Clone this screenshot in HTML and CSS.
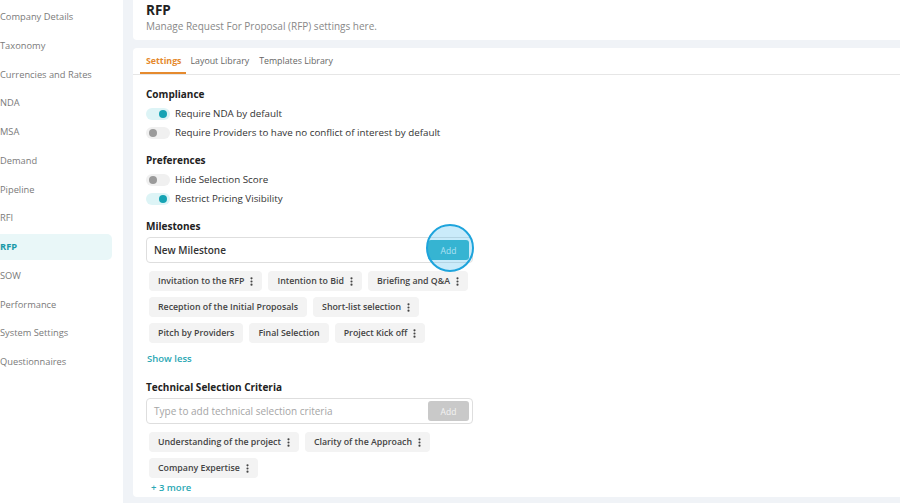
FILE: index.html
```html
<!doctype html>
<html>
  <head>
    <title>RFP Settings</title>
    <link rel="stylesheet" href="styles.css">
  </head>
  <body>
    <div class="sidebar">
      <div class="nav-item">Company Details</div>
      <div class="nav-item">Taxonomy</div>
      <div class="nav-item">Currencies and Rates</div>
      <div class="nav-item">NDA</div>
      <div class="nav-item">MSA</div>
      <div class="nav-item">Demand</div>
      <div class="nav-item">Pipeline</div>
      <div class="nav-item">RFI</div>
      <div class="nav-item active">RFP</div>
      <div class="nav-item">SOW</div>
      <div class="nav-item">Performance</div>
      <div class="nav-item">System Settings</div>
      <div class="nav-item">Questionnaires</div>
    </div>
    <div class="main">
      <div class="card header">
        <h1>RFP</h1>
        <p>Manage Request For Proposal (RFP) settings here.</p>
      </div>
      <div class="card settings">
        <div class="tabs">
          <div class="tab active">Settings</div>
          <div class="tab">Layout Library</div>
          <div class="tab">Templates Library</div>
        </div>
        <div class="body">
          <div class="section">
            <h2>Compliance</h2>
            <div class="toggle-row"><span class="toggle on"></span>Require NDA by default</div>
            <div class="toggle-row"><span class="toggle"></span>Require Providers to have no conflict of interest by default</div>
          </div>
          <div class="section">
            <h2>Preferences</h2>
            <div class="toggle-row"><span class="toggle"></span>Hide Selection Score</div>
            <div class="toggle-row"><span class="toggle on"></span>Restrict Pricing Visibility</div>
          </div>
          <div class="section">
            <h2>Milestones</h2>
            <div class="input-box">
              <span class="value">New Milestone</span>
              <button class="add active">Add</button>
              <span class="highlight"></span>
            </div>
            <div class="chips">
              <span class="chip">Invitation to the RFP <svg class="kebab" viewBox="0 0 3 10"><circle cx="1.5" cy="1.5" r="1.2"/><circle cx="1.5" cy="5" r="1.2"/><circle cx="1.5" cy="8.5" r="1.2"/></svg></span>
              <span class="chip">Intention to Bid <svg class="kebab" viewBox="0 0 3 10"><circle cx="1.5" cy="1.5" r="1.2"/><circle cx="1.5" cy="5" r="1.2"/><circle cx="1.5" cy="8.5" r="1.2"/></svg></span>
              <span class="chip">Briefing and Q&amp;A <svg class="kebab" viewBox="0 0 3 10"><circle cx="1.5" cy="1.5" r="1.2"/><circle cx="1.5" cy="5" r="1.2"/><circle cx="1.5" cy="8.5" r="1.2"/></svg></span>
              <span class="chip">Reception of the Initial Proposals</span>
              <span class="chip">Short-list selection <svg class="kebab" viewBox="0 0 3 10"><circle cx="1.5" cy="1.5" r="1.2"/><circle cx="1.5" cy="5" r="1.2"/><circle cx="1.5" cy="8.5" r="1.2"/></svg></span>
              <span class="chip">Pitch by Providers</span>
              <span class="chip">Final Selection</span>
              <span class="chip">Project Kick off <svg class="kebab" viewBox="0 0 3 10"><circle cx="1.5" cy="1.5" r="1.2"/><circle cx="1.5" cy="5" r="1.2"/><circle cx="1.5" cy="8.5" r="1.2"/></svg></span>
            </div>
            <a class="link less">Show less</a>
          </div>
          <div class="section">
            <h2>Technical Selection Criteria</h2>
            <div class="input-box">
              <span class="placeholder">Type to add technical selection criteria</span>
              <button class="add">Add</button>
            </div>
            <div class="chips">
              <span class="chip">Understanding of the project <svg class="kebab" viewBox="0 0 3 10"><circle cx="1.5" cy="1.5" r="1.2"/><circle cx="1.5" cy="5" r="1.2"/><circle cx="1.5" cy="8.5" r="1.2"/></svg></span>
              <span class="chip">Clarity of the Approach <svg class="kebab" viewBox="0 0 3 10"><circle cx="1.5" cy="1.5" r="1.2"/><circle cx="1.5" cy="5" r="1.2"/><circle cx="1.5" cy="8.5" r="1.2"/></svg></span>
              <span class="chip">Company Expertise <svg class="kebab" viewBox="0 0 3 10"><circle cx="1.5" cy="1.5" r="1.2"/><circle cx="1.5" cy="5" r="1.2"/><circle cx="1.5" cy="8.5" r="1.2"/></svg></span>
            </div>
            <a class="link more">+ 3 more</a>
          </div>
        </div>
      </div>
    </div>
  </body>
</html>
```
FILE: styles.css
```css
body {
  margin: 0;
  padding: 0;
  width: 900px;
  height: 503px;
  overflow: hidden;
  display: flex;
  font-family: 'Open Sans', sans-serif;
  color: #333;
  background-color: #f0f3f7;
}
.sidebar {
  width: 123px;
  flex-shrink: 0;
  background-color: #fff;
  padding-top: 4px;
  box-sizing: border-box;
}
.nav-item {
  height: 26px;
  line-height: 26px;
  margin-bottom: 2.75px;
  width: 112px;
  font-size: 9.3px;
  color: #7a7a7a;
  border-radius: 0 5px 5px 0;
}
.nav-item.active {
  background-color: #e9f7f8;
  color: #1a9aa8;
  font-weight: 700;
}
.main {
  flex: 1;
  padding: 0 0 6px 10px;
  display: flex;
  flex-direction: column;
  gap: 8px;
  min-width: 0;
}
.card {
  background-color: #fff;
  border-radius: 4px 0 0 4px;
}
.card.header {
  flex-shrink: 0;
  height: 40px;
  padding: 0 13px;
  box-sizing: border-box;
  border-radius: 0 0 0 4px;
}
.card.header h1 {
  margin: 0;
  padding-top: 1px;
  font-size: 13.5px;
  font-weight: 700;
  color: #222;
  line-height: 18px;
}
.card.header p {
  margin: 0;
  font-size: 10px;
  color: #888;
  line-height: 14px;
}
.card.settings {
  flex: 1;
  overflow: hidden;
}
.tabs {
  display: flex;
  padding: 0 7px;
  height: 26px;
  border-bottom: 1px solid #e6e6e6;
}
.tab {
  padding: 0 5px;
  line-height: 26px;
  font-size: 8.8px;
  color: #666;
}
.tab.active {
  color: #e58a2e;
  font-weight: 700;
  border-bottom: 2px solid #e58a2e;
  padding: 0 4px 0 6px;
}
.body {
  padding: 12px 13px 0;
}
.section {
  margin-bottom: 11px;
}
.section h2 {
  margin: 0 0 3px;
  font-size: 10px;
  font-weight: 700;
  color: #222;
  line-height: 14px;
}
.toggle-row {
  display: flex;
  align-items: center;
  height: 19px;
  font-size: 9.8px;
  color: #333;
}
.toggle {
  position: relative;
  width: 24px;
  height: 12px;
  border-radius: 6px;
  background-color: #f0f0f0;
  margin-right: 5px;
}
.toggle::after {
  content: '';
  position: absolute;
  top: 2px;
  left: 3px;
  width: 8px;
  height: 8px;
  border-radius: 50%;
  background-color: #9a9a9a;
}
.toggle.on {
  background-color: #ddf4f6;
}
.toggle.on::after {
  left: 13px;
  background-color: #16a3b4;
}
.input-box {
  position: relative;
  display: flex;
  align-items: center;
  justify-content: space-between;
  width: 327px;
  height: 26px;
  margin-top: 4px;
  box-sizing: border-box;
  border: 1px solid #dedede;
  border-radius: 4px;
  padding: 0 3px 0 7px;
  font-size: 10px;
}
.input-box .value {
  font-weight: 600;
  color: #333;
}
.input-box .placeholder {
  color: #a5a5a5;
}
.add {
  width: 41px;
  height: 20px;
  border: none;
  border-radius: 3px;
  background-color: #c9c9c9;
  color: #f4f4f4;
  font-family: 'Open Sans', sans-serif;
  font-size: 8.5px;
  padding: 0;
}
.add.active {
  background-color: #2bb1c6;
  color: #d8f2f6;
}
.highlight {
  position: absolute;
  right: -2px;
  top: -14px;
  width: 48px;
  height: 48px;
  border-radius: 50%;
  border: 2px solid #1ea4dc;
  background-color: rgba(80, 190, 240, 0.3);
  box-sizing: border-box;
}
.chips {
  display: flex;
  flex-wrap: wrap;
  gap: 6px;
  padding: 8px 3px 0;
  width: 330px;
}
.chip {
  display: inline-flex;
  align-items: center;
  gap: 6px;
  height: 20px;
  padding: 0 9px;
  background-color: #f3f3f3;
  border-radius: 4px;
  font-size: 8.8px;
  font-weight: 600;
  color: #444;
}
.kebab {
  width: 3px;
  height: 9px;
  fill: #444;
}
.link {
  display: block;
  margin-top: 9px;
  font-size: 9.5px;
  font-weight: 600;
  color: #2aa8b4;
  padding-left: 1px;
}
.link.less {
  margin-bottom: 15px;
}
.link.more {
  margin-top: 3px;
  padding-left: 5px;
}
```
